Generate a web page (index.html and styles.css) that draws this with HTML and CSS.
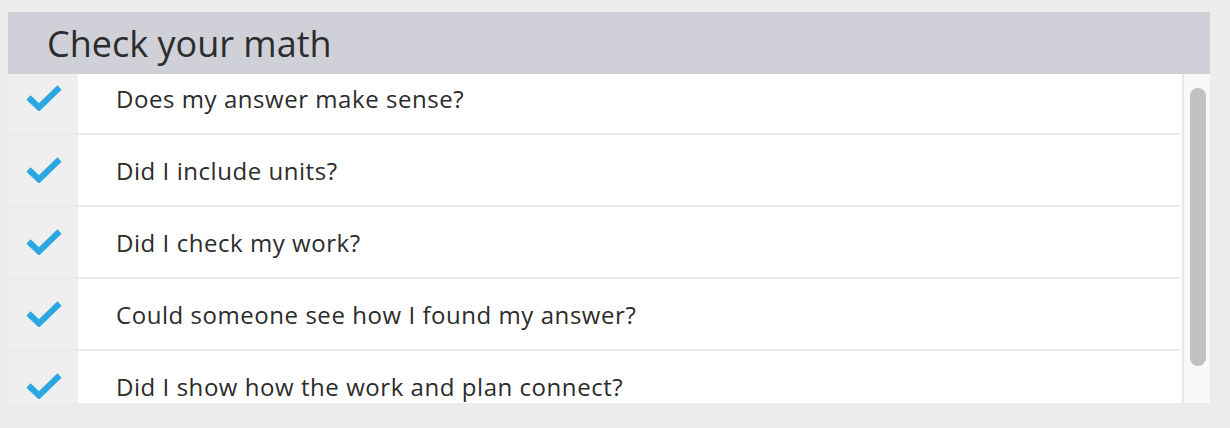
FILE: index.html
```
<!DOCTYPE html>
<html>
<head>
<meta charset="utf-8">
<link rel="stylesheet" href="styles.css">
</head>
<body>
<div class="panel">
  <div class="header"><h1 class="title">Check your math</h1></div>
  <div class="body">
    <div class="viewport">
      <ul class="list">
        <li class="row"><span class="icon"><svg viewBox="0 0 36 26" width="36" height="26"><path d="M2.5 12.5 L13 22.5 L33.5 2.5" fill="none" stroke="#2ba8e0" stroke-width="6"/></svg></span><span class="text">Does my answer make sense?</span></li>
        <li class="row"><span class="icon"><svg viewBox="0 0 36 26" width="36" height="26"><path d="M2.5 12.5 L13 22.5 L33.5 2.5" fill="none" stroke="#2ba8e0" stroke-width="6"/></svg></span><span class="text">Did I include units?</span></li>
        <li class="row"><span class="icon"><svg viewBox="0 0 36 26" width="36" height="26"><path d="M2.5 12.5 L13 22.5 L33.5 2.5" fill="none" stroke="#2ba8e0" stroke-width="6"/></svg></span><span class="text">Did I check my work?</span></li>
        <li class="row"><span class="icon"><svg viewBox="0 0 36 26" width="36" height="26"><path d="M2.5 12.5 L13 22.5 L33.5 2.5" fill="none" stroke="#2ba8e0" stroke-width="6"/></svg></span><span class="text">Could someone see how I found my answer?</span></li>
        <li class="row"><span class="icon"><svg viewBox="0 0 36 26" width="36" height="26"><path d="M2.5 12.5 L13 22.5 L33.5 2.5" fill="none" stroke="#2ba8e0" stroke-width="6"/></svg></span><span class="text">Did I show how the work and plan connect?</span></li>
      </ul>
    </div>
    <div class="scrollbar"><div class="thumb"></div></div>
  </div>
</div>
</body>
</html>
```
FILE: styles.css
```
html, body {
  margin: 0;
  padding: 0;
  background: #ececec;
}
body {
  padding: 12px 20px 0 8px;
  font-family: "Open Sans", Lato, sans-serif;
  color: #333;
}
.panel {
  width: 1202px;
  background: #fff;
}
.header {
  height: 62px;
  background: #cfd0d8;
  display: flex;
  align-items: center;
  padding-left: 39px;
}
.title {
  margin: 0;
  font-size: 36px;
  font-weight: 400;
  color: #2c2c2c;
}
.body {
  display: flex;
  height: 329px;
}
.viewport {
  flex: 1;
  overflow: hidden;
  padding-right: 2px;
}
.list {
  list-style: none;
  margin: -11px 0 0 0;
  padding: 0;
}
.row {
  display: flex;
  height: 70px;
  border-bottom: 2px solid #ebebeb;
}
.icon {
  width: 70px;
  flex: none;
  background: #efefef;
  display: flex;
  align-items: center;
  justify-content: center;
  padding-left: 2px;
  box-sizing: border-box;
}
.text {
  display: flex;
  align-items: center;
  padding-left: 38px;
  font-size: 24px;
  letter-spacing: 0.55px;
  color: #2c2c2c;
}
.scrollbar {
  width: 16px;
  flex: none;
  background: #f8f8f8;
  border-left: 2px solid #e8e8e8;
  padding: 14px 4px 0 6px;
}
.thumb {
  height: 278px;
  background: #c1c1c1;
  border-radius: 8px;
}
```
